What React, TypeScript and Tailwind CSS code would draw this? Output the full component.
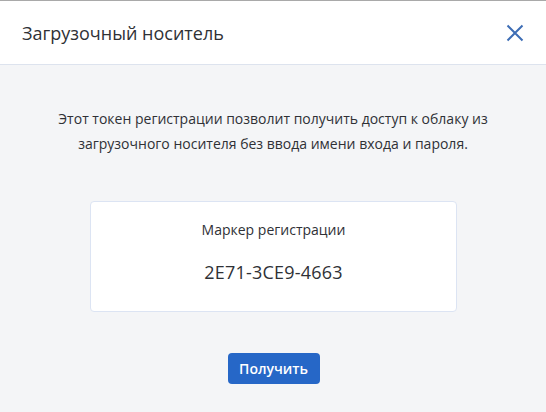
const App = () => {
  return (
    <div
      className="flex h-[412px] w-[546px] flex-col border-t border-[#a9a9a9] bg-[#f4f5f7] text-[#2f3136]"
      style={{ fontFamily: '"Open Sans", "Noto Sans", sans-serif' }}
    >
      {/* Header */}
      <div className="flex h-[64px] shrink-0 items-center justify-between border-b border-[#dde3ee] bg-white pl-[22px] pr-[22px]">
        <h1 className="text-[18px] font-normal leading-none">Загрузочный носитель</h1>
        <button className="text-[#3d6db5]">
          <svg width="18" height="18" viewBox="0 0 18 18" fill="none" stroke="currentColor" strokeWidth="2">
            <path d="M1.5 1.5L16.5 16.5M16.5 1.5L1.5 16.5" />
          </svg>
        </button>
      </div>

      {/* Body */}
      <div className="flex flex-col items-center px-10 pt-[41px]">
        <p className="text-center text-[14px] leading-[25px]">
          Этот токен регистрации позволит получить доступ к облаку из
          <br />
          загрузочного носителя без ввода имени входа и пароля.
        </p>

        <div className="ml-px mt-[45px] flex h-[111px] w-[367px] flex-col items-center rounded-[4px] border border-[#dce4f3] bg-white pt-[18px]">
          <div className="text-[14px] leading-[20px]">Маркер регистрации</div>
          <div className="mt-[20px] text-[18px] leading-[24px] tracking-[0.2px]">2E71-3CE9-4663</div>
        </div>

        <button className="ml-px mt-[41px] h-[31px] w-[92px] rounded-[4px] bg-[#2667c7] text-[14px] font-semibold text-white">
          Получить
        </button>
      </div>
    </div>
  );
};

export default App;
